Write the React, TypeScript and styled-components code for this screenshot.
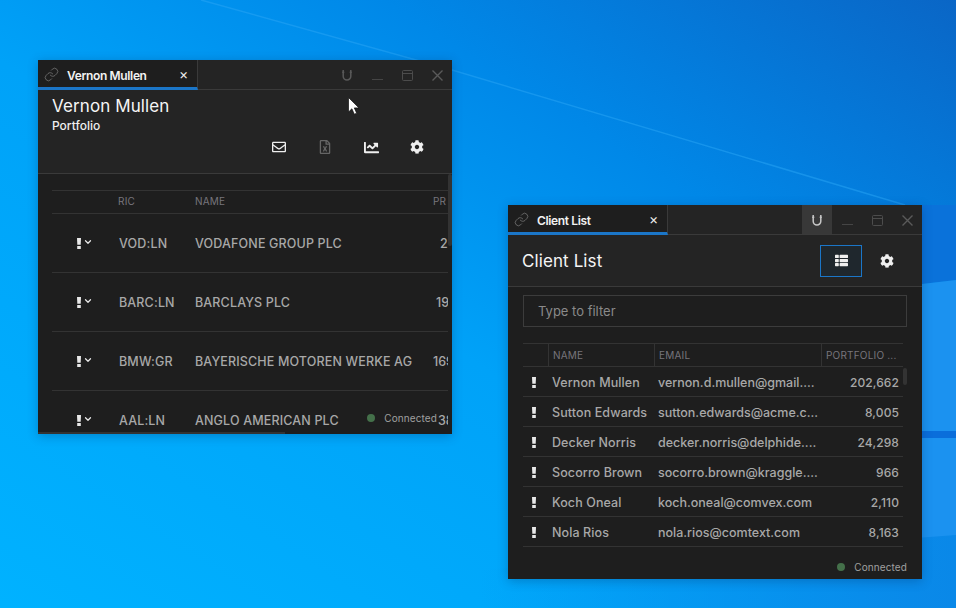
import React from "react";
import styled, { createGlobalStyle } from "styled-components";
import { FaChartLine, FaCog, FaRegEnvelope, FaRegFileExcel, FaThList } from "react-icons/fa";
import { FiChevronDown } from "react-icons/fi";
import { Link } from "lucide-react";

const GlobalStyle = createGlobalStyle`
  html, body {
    margin: 0;
    padding: 0;
    width: 956px;
    height: 608px;
    overflow: hidden;
    font-family: Inter, "Noto Sans", sans-serif;
  }
  * { box-sizing: border-box; }
`;

const positions = [
  { ric: "VOD:LN", name: "VODAFONE GROUP PLC", price: "2", indent: 7 },
  { ric: "BARC:LN", name: "BARCLAYS PLC", price: "19", indent: 3 },
  { ric: "BMW:GR", name: "BAYERISCHE MOTOREN WERKE AG", price: "169", indent: 0 },
  { ric: "AAL:LN", name: "ANGLO AMERICAN PLC", price: "38", indent: 5 },
];

const clients = [
  { name: "Vernon Mullen", email: "vernon.d.mullen@gmail....", value: "202,662" },
  { name: "Sutton Edwards", email: "sutton.edwards@acme.c...", value: "8,005" },
  { name: "Decker Norris", email: "decker.norris@delphide....", value: "24,298" },
  { name: "Socorro Brown", email: "socorro.brown@kraggle....", value: "966" },
  { name: "Koch Oneal", email: "koch.oneal@comvex.com", value: "2,110" },
  { name: "Nola Rios", email: "nola.rios@comtext.com", value: "8,163" },
];

const Magnet = () => (
  <svg width="10" height="11" viewBox="0 0 10 11" fill="none" stroke="currentColor" strokeWidth="1.5">
    <path d="M1.2 0v6.2a3.8 3.8 0 0 0 7.6 0V0" />
    <path d="M0 2.2h2.4M7.6 2.2H10" strokeWidth="1" />
  </svg>
);

const Minimize = () => (
  <svg width="11" height="11" viewBox="0 0 11 11" stroke="#454545" fill="none">
    <path d="M0 9.5h11" />
  </svg>
);

const Maximize = () => (
  <svg width="11" height="11" viewBox="0 0 11 11" stroke="#4c4c4c" fill="none">
    <rect x="0.5" y="0.5" width="10" height="10" rx="1" />
    <path d="M0 3.5h11" />
  </svg>
);

const Close = () => (
  <svg width="11" height="11" viewBox="0 0 11 11" stroke="currentColor" strokeWidth="1.4" fill="none">
    <path d="M0.5 0.5l10 10M10.5 0.5l-10 10" />
  </svg>
);

const Alert = () => (
  <svg width="4" height="11" viewBox="0 0 4 11" fill="currentColor">
    <path d="M0 0h4l-.3 6.8H.3z" />
    <rect x="0.2" y="8" width="3.6" height="3" />
  </svg>
);

const TitleBar = ({ title, pinned }: { title: string; pinned?: boolean }) => (
  <Bar>
    <Tab>
      <TabLink size={15} strokeWidth={1} />
      <TabTitle>{title}</TabTitle>
      <TabClose>×</TabClose>
    </Tab>
    <Controls>
      <Control $active={pinned}>
        <Magnet />
      </Control>
      <Control>
        <Minimize />
      </Control>
      <Control>
        <Maximize />
      </Control>
      <Control>
        <Close />
      </Control>
    </Controls>
  </Bar>
);

const Status = () => (
  <StatusWrap>
    <Dot />
    Connected
  </StatusWrap>
);

export default function App() {
  return (
    <Desktop>
      <GlobalStyle />
      <Wallpaper viewBox="0 0 956 608" preserveAspectRatio="none">
        <defs>
          <linearGradient id="sky" x1="0" y1="1" x2="1" y2="0">
            <stop offset="0" stopColor="#00b2ff" />
            <stop offset="0.45" stopColor="#00a2f8" />
            <stop offset="0.7" stopColor="#0088e8" />
            <stop offset="1" stopColor="#0a66c6" />
          </linearGradient>
          <linearGradient id="floor" x1="0" y1="0" x2="1" y2="0">
            <stop offset="0" stopColor="#0a88e8" stopOpacity="0" />
            <stop offset="1" stopColor="#0a88e8" />
          </linearGradient>
        </defs>
        <rect width="956" height="608" fill="url(#sky)" />
        <path d="M201 0L452 70L905 205" stroke="#2aa6f6" strokeWidth="1.5" opacity="0.5" fill="none" />
        <polygon points="922,205 956,205 956,280 922,284" fill="#0a72da" />
        <polygon points="922,284 956,280 956,431 922,431" fill="#1b92f0" />
        <polygon points="922,431 956,431 956,438 922,438" fill="#0a6edb" />
        <polygon points="922,438 956,438 956,535 925,540 922,540" fill="#1b92f0" />
        <polygon points="480,570 956,535 956,608 480,608" fill="url(#floor)" />
      </Wallpaper>

      <Window $left={38} $top={60}>
        <TitleBar title="Vernon Mullen" />
        <PortfolioHeader>
          <Heading>Vernon Mullen</Heading>
          <SubHeading>Portfolio</SubHeading>
          <ActionRow>
            <ActionIcon>
              <FaRegEnvelope size={14} />
            </ActionIcon>
            <ActionIcon $dim>
              <FaRegFileExcel size={14} />
            </ActionIcon>
            <ActionIcon>
              <FaChartLine size={15} />
            </ActionIcon>
            <ActionIcon>
              <FaCog size={14} />
            </ActionIcon>
          </ActionRow>
        </PortfolioHeader>
        <PortfolioBody>
          <PortfolioHead>
            <span />
            <HeadLabel>RIC</HeadLabel>
            <HeadLabel>NAME</HeadLabel>
            <HeadLabel>PR</HeadLabel>
          </PortfolioHead>
          {positions.map((p) => (
            <PortfolioRow key={p.ric}>
              <RowMenu>
                <Alert />
                <RowChevron size={10} strokeWidth={3} />
              </RowMenu>
              <RicCell>{p.ric}</RicCell>
              <Cell>{p.name}</Cell>
              <PriceCell $indent={p.indent}>{p.price}</PriceCell>
            </PortfolioRow>
          ))}
          <FloatingStatus>
            <Status />
          </FloatingStatus>
          <VScroll $right={0} $top={0} $height={72} />
          <HScroll />
        </PortfolioBody>
      </Window>

      <Window $left={508} $top={205}>
        <TitleBar title="Client List" pinned />
        <ClientHeader>
          <ClientTitle>Client List</ClientTitle>
          <ClientActions>
            <ToggleButton>
              <FaThList size={13} />
            </ToggleButton>
            <ActionIcon>
              <FaCog size={14} />
            </ActionIcon>
          </ClientActions>
        </ClientHeader>
        <ClientBody>
          <FilterBox>Type to filter</FilterBox>
          <ClientTable>
            <ClientHead>
              <HeadCell />
              <HeadCell>NAME</HeadCell>
              <HeadCell>EMAIL</HeadCell>
              <HeadCell>PORTFOLIO ...</HeadCell>
            </ClientHead>
            {clients.map((c) => (
              <ClientRow key={c.name}>
                <ClientMenu>
                  <Alert />
                </ClientMenu>
                <ClientCell>{c.name}</ClientCell>
                <ClientEmail>{c.email}</ClientEmail>
                <ClientValue>{c.value}</ClientValue>
              </ClientRow>
            ))}
            <VScroll $right={-4} $top={25} $height={17} />
          </ClientTable>
          <ClientFooter>
            <Status />
          </ClientFooter>
        </ClientBody>
      </Window>

      <Cursor viewBox="0 0 12 18">
        <path d="M0.5 0.5v14.5l3.4-3.2 2.4 5.4 2.4-1-2.4-5.3h4.7z" fill="#fff" stroke="#111" strokeWidth="0.7" />
      </Cursor>
    </Desktop>
  );
}

const Desktop = styled.div`
  position: relative;
  width: 956px;
  height: 608px;
  overflow: hidden;
  background: #0090ee;
`;

const Wallpaper = styled.svg`
  position: absolute;
  inset: 0;
  width: 956px;
  height: 608px;
`;

const Window = styled.div<{ $left: number; $top: number }>`
  position: absolute;
  left: ${(p) => p.$left}px;
  top: ${(p) => p.$top}px;
  width: 414px;
  height: 374px;
  display: flex;
  flex-direction: column;
  background: #1e1e1e;
  overflow: hidden;
  box-shadow: 0 2px 10px rgba(0, 40, 90, 0.3);
`;

const Bar = styled.div`
  flex: 0 0 30px;
  display: flex;
  justify-content: space-between;
  background: #242424;
  box-shadow: inset 0 -1px 0 #3a3a3a;
`;

const Tab = styled.div`
  width: 160px;
  height: 30px;
  display: flex;
  align-items: center;
  padding: 4px 0 0 6px;
  background: #1e1e1e;
  border-bottom: 3px solid #1b76c8;
  border-right: 1px solid #3a3a3a;
`;

const TabLink = styled(Link)`
  color: #8c8c8c;
  flex: none;
  margin-top: -3px;
`;

const TabTitle = styled.span`
  margin-left: 8px;
  font-size: 12px;
  font-weight: 600;
  letter-spacing: -0.35px;
  color: #f2f2f2;
  flex: 1;
`;

const TabClose = styled.span`
  width: 18px;
  font-size: 14px;
  line-height: 14px;
  color: #eee;
  margin-top: -3px;
`;

const Controls = styled.div`
  display: flex;
`;

const Control = styled.div<{ $active?: boolean }>`
  width: 30px;
  height: 29px;
  padding-top: 1px;
  display: flex;
  align-items: center;
  justify-content: center;
  color: ${(p) => (p.$active ? "#c8c8c8" : "#5a5a5a")};
  background: ${(p) => (p.$active ? "#383838" : "transparent")};
`;

const PortfolioHeader = styled.div`
  flex: 0 0 84px;
  padding: 6px 14px 0;
  display: flex;
  flex-direction: column;
  background: #242424;
  border-bottom: 1px solid #3a3a3a;
`;

const Heading = styled.div`
  font-size: 17px;
  line-height: 20px;
  font-weight: 400;
  letter-spacing: 0.1px;
  color: #f5f5f5;
`;

const SubHeading = styled.div`
  margin-top: 3px;
  font-size: 12px;
  line-height: 14px;
  font-weight: 500;
  color: #efefef;
`;

const ActionRow = styled.div`
  display: flex;
  justify-content: flex-end;
  margin: 2px -2px 0 0;
`;

const ActionIcon = styled.div<{ $dim?: boolean }>`
  width: 46px;
  height: 24px;
  display: flex;
  align-items: center;
  justify-content: center;
  color: ${(p) => (p.$dim ? "#666" : "#efefef")};
`;

const PortfolioBody = styled.div`
  position: relative;
  flex: 1;
  padding: 16px 4px 0 14px;
  overflow: hidden;
`;

const portfolioColumns = "66px 77px 238px 15px";

const PortfolioHead = styled.div`
  display: grid;
  grid-template-columns: ${portfolioColumns};
  align-items: center;
  height: 24px;
  padding-bottom: 2px;
  border-top: 1px solid #333;
  border-bottom: 1px solid #333;
`;

const HeadLabel = styled.span`
  font-size: 10px;
  letter-spacing: 0.2px;
  color: #77757c;
  white-space: nowrap;
`;

const PortfolioRow = styled.div`
  display: grid;
  grid-template-columns: ${portfolioColumns};
  align-items: center;
  height: 59px;
  border-bottom: 1px solid #333;
`;

const RowMenu = styled.div`
  display: flex;
  align-items: center;
  justify-content: flex-end;
  padding-right: 25px;
  gap: 2px;
  color: #e8e8e8;
  height: 12px;
`;

const RowChevron = styled(FiChevronDown)`
  margin-top: -2px;
`;

const Cell = styled.span`
  font-size: 12.5px;
  font-weight: 500;
  letter-spacing: 0.15px;
  color: #a8a8a8;
  white-space: nowrap;
`;

const RicCell = styled(Cell)`
  padding-left: 1px;
`;

const PriceCell = styled(Cell)<{ $indent: number }>`
  padding-left: ${(p) => p.$indent}px;
  letter-spacing: 0;
  overflow: hidden;
`;

const FloatingStatus = styled.div`
  position: absolute;
  right: 15px;
  top: 238px;
`;

const StatusWrap = styled.div`
  display: flex;
  align-items: center;
  gap: 9px;
  font-size: 10px;
  letter-spacing: 0.1px;
  color: #a0a0a0;
  line-height: 12px;
`;

const Dot = styled.span`
  width: 8px;
  height: 8px;
  border-radius: 50%;
  background: #44704a;
`;

const VScroll = styled.div<{ $right: number; $top: number; $height: number }>`
  position: absolute;
  right: ${(p) => p.$right}px;
  top: ${(p) => p.$top}px;
  width: 4px;
  height: ${(p) => p.$height}px;
  background: #333;
  border-radius: 2px;
`;

const HScroll = styled.div`
  position: absolute;
  left: 0;
  bottom: 0;
  width: 247px;
  height: 2px;
  background: #333;
`;

const ClientHeader = styled.div`
  flex: 0 0 52px;
  display: flex;
  align-items: center;
  justify-content: space-between;
  padding: 0 0 0 14px;
  background: #242424;
  border-bottom: 1px solid #3a3a3a;
`;

const ClientTitle = styled.div`
  font-size: 17px;
  font-weight: 400;
  letter-spacing: 0.1px;
  color: #f5f5f5;
`;

const ClientActions = styled.div`
  display: flex;
  align-items: center;
  gap: 2px;
  padding-right: 12px;
`;

const ToggleButton = styled.div`
  width: 42px;
  height: 32px;
  display: flex;
  align-items: center;
  justify-content: center;
  color: #efefef;
  background: #1f272d;
  border: 1px solid #1b76c8;
`;

const ClientBody = styled.div`
  flex: 1;
  display: flex;
  flex-direction: column;
  padding: 8px 15px 0;
`;

const FilterBox = styled.div`
  height: 32px;
  display: flex;
  align-items: center;
  padding-left: 14px;
  border: 1px solid #3c3c3c;
  font-size: 13px;
  color: #8a8a8a;
`;

const ClientTable = styled.div`
  position: relative;
  margin: 16px 4px 0 0;
`;

const clientColumns = "26px 106px 167px 1fr";

const ClientHead = styled.div`
  display: grid;
  grid-template-columns: ${clientColumns};
  height: 24px;
  border-top: 1px solid #333;
  border-bottom: 1px solid #333;
`;

const HeadCell = styled.div`
  display: flex;
  align-items: center;
  padding-left: 4px;
  border-right: 1px solid #333;
  font-size: 10px;
  letter-spacing: 0.2px;
  color: #77757c;
  white-space: nowrap;

  &:last-child {
    border-right: 0;
  }
`;

const ClientRow = styled.div`
  display: grid;
  grid-template-columns: ${clientColumns};
  align-items: center;
  height: 30px;
  padding-top: 1px;
  border-bottom: 1px solid #333;
`;

const ClientMenu = styled.div`
  display: flex;
  justify-content: center;
  padding-right: 4px;
  color: #e8e8e8;
`;

const ClientCell = styled.span`
  padding-left: 3px;
  font-size: 12.5px;
  font-weight: 500;
  letter-spacing: 0.1px;
  color: #a8a8a8;
  white-space: nowrap;
  overflow: hidden;
`;

const ClientEmail = styled(ClientCell)`
  letter-spacing: 0;
`;

const ClientValue = styled(ClientCell)`
  text-align: right;
  padding-right: 4px;
  font-size: 12px;
`;

const ClientFooter = styled.div`
  display: flex;
  justify-content: flex-end;
  margin-top: 14px;
`;

const Cursor = styled.svg`
  position: absolute;
  left: 348px;
  top: 97px;
  width: 12px;
  height: 18px;
`;
